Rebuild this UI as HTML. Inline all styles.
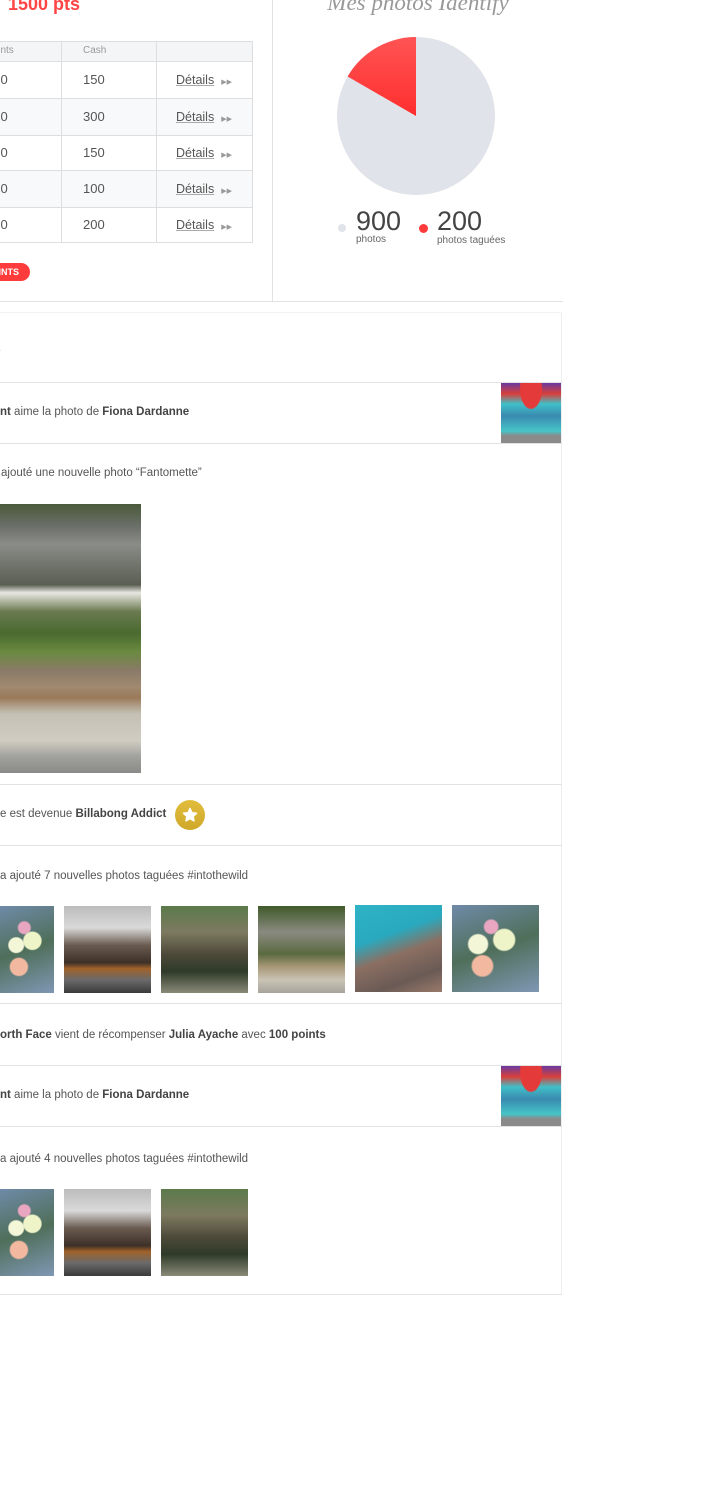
<!DOCTYPE html>
<html><head><meta charset="utf-8"><style>
*{margin:0;padding:0;box-sizing:border-box}
body{width:701px;height:1492px;background:#fff;position:relative;overflow:hidden;font-family:"Liberation Sans",sans-serif;color:#555}
.a{position:absolute}
.hl{position:absolute;height:1px;background:#e2e2e2}
.t{position:absolute;font-size:11.5px;color:#555;white-space:nowrap;line-height:14px}
.t b{color:#444}
table{border-collapse:collapse;position:absolute;left:-36px;top:41px;font-size:13px;color:#555}
td{border:1px solid #dedede;padding:0 0 2px 21px}
.det{color:#555;text-decoration:underline;text-decoration-color:#aaa;font-size:12.5px}
.arr{font-size:7px;color:#999;margin-left:7px}
.flw{background:radial-gradient(circle at 30% 45%,#f4f6d8 0 12%,transparent 14%),radial-gradient(circle at 60% 40%,#eef3c8 0 14%,transparent 16%),radial-gradient(circle at 35% 70%,#f2b8a0 0 12%,transparent 14%),radial-gradient(circle at 45% 25%,#e9a6c0 0 8%,transparent 10%),linear-gradient(160deg,#6f8aa8,#4f6f5a 50%,#7f97b4)}
.mtn{background:linear-gradient(180deg,#bcbcbc 0,#d9d9d9 25%,#6a5b50 45%,#3c3028 65%,#a0622a 72%,#6a6a6a 85%,#3a3a3a)}
.cab{background:linear-gradient(180deg,#5b7a4a 0,#7d7a60 30%,#4e4a3a 55%,#2f3a28 75%,#8a8a78)}
.hou{background:linear-gradient(180deg,#3f5a2a 0,#8a8a80 30%,#5a6a40 55%,#a89878 70%,#c9c3b4 85%,#a8a49c)}
.sea{background:linear-gradient(160deg,#2fb3c6 0,#2aa9be 35%,#8b6f62 55%,#6a5a55 80%,#9a7a6a)}
.bike{background:radial-gradient(ellipse at 50% 10%,#e53a3a 0 25%,transparent 27%),linear-gradient(180deg,#6a3aa0 0,#d8403a 18%,#3fc0c8 35%,#3a8ab0 55%,#46c4c8 80%,#8a8a8a 88%)}
</style></head><body>

<div class="a" style="left:8px;top:-6px;font-size:18px;font-weight:bold;color:#ff4545">1500 pts</div>

<table>
<tr style="background:#f4f5f7;height:20px;font-size:10px;color:#999"><td style="width:97px">Points</td><td style="width:95px">Cash</td><td style="width:96px;padding-left:19px"></td></tr>
<tr style="height:37px"><td>100</td><td>150</td><td style="padding-left:19px"><span class="det">Détails</span><span class="arr">▶▶</span></td></tr>
<tr style="height:37px;background:#f8f9fa"><td>200</td><td>300</td><td style="padding-left:19px"><span class="det">Détails</span><span class="arr">▶▶</span></td></tr>
<tr style="height:35px"><td>100</td><td>150</td><td style="padding-left:19px"><span class="det">Détails</span><span class="arr">▶▶</span></td></tr>
<tr style="height:37px;background:#f8f9fa"><td>100</td><td>100</td><td style="padding-left:19px"><span class="det">Détails</span><span class="arr">▶▶</span></td></tr>
<tr style="height:35px"><td>100</td><td>200</td><td style="padding-left:19px"><span class="det">Détails</span><span class="arr">▶▶</span></td></tr>
</table>

<div class="a" style="left:-40px;top:263px;width:70px;height:18px;border-radius:9px;background:#ff3b3b;color:#fff;font-size:9px;font-weight:bold;text-align:right;padding-right:11px;line-height:18px">POINTS</div>

<div class="a" style="left:272px;top:0;width:1px;height:301px;background:#e2e2e2"></div>
<div class="hl" style="left:0;top:301px;width:563px"></div>

<div class="a" style="left:300px;top:-10px;width:236px;text-align:center;font-family:'Liberation Serif',serif;font-style:italic;font-size:23px;color:#999">Mes photos Identify</div>

<svg class="a" style="left:337px;top:37px" width="158" height="158" viewBox="0 0 158 158">
<defs><linearGradient id="g" x1="0" y1="0" x2="0" y2="1"><stop offset="0" stop-color="#ff5454"/><stop offset="1" stop-color="#ff2e2e"/></linearGradient></defs>
<circle cx="79" cy="79" r="79" fill="#e0e3e9"/>
<path d="M79 79 L79 0 A79 79 0 0 0 10.6 39.5 Z" fill="url(#g)"/>
</svg>

<div class="a" style="left:338px;top:224px;width:8px;height:8px;border-radius:50%;background:#e0e3e9"></div>
<div class="a" style="left:356px;top:206px;font-size:27px;color:#444;line-height:30px">900</div>
<div class="a" style="left:356px;top:234px;font-size:10px;color:#666">photos</div>
<div class="a" style="left:419px;top:224px;width:9px;height:9px;border-radius:50%;background:#ff3b3b"></div>
<div class="a" style="left:437px;top:206px;font-size:27px;color:#444;line-height:30px">200</div>
<div class="a" style="left:437px;top:235px;font-size:10px;color:#666">photos taguées</div>

<!-- feed -->
<div class="a" style="left:561px;top:312px;width:1px;height:983px;background:#eee"></div>
<div class="hl" style="left:0;top:312px;width:562px;background:#f2f2f2"></div>
<div class="t" style="left:-2px;top:341px">.</div>
<div class="hl" style="left:0;top:382px;width:562px"></div>
<div class="t" style="left:0;top:405px"><b>nt</b> aime la photo de <b>Fiona Dardanne</b></div>
<div class="a bike" style="left:501px;top:383px;width:60px;height:60px"></div>
<div class="hl" style="left:0;top:443px;width:562px"></div>
<div class="t" style="left:1px;top:466px">ajouté une nouvelle photo “Fantomette”</div>
<div class="a" style="left:0;top:504px;width:141px;height:269px;background:linear-gradient(180deg,#4a5a3a 0,#6a6e68 8%,#8a8c88 15%,#5a5e52 30%,#e8e8e2 33%,#6a7a50 40%,#4a6a30 48%,#6a8a40 55%,#8a7a68 62%,#a08a70 68%,#9a7a5a 72%,#c4c0b4 78%,#d0ccc2 88%,#a0a09c 94%,#8a8a88)"></div>
<div class="hl" style="left:0;top:784px;width:562px"></div>
<div class="t" style="left:0;top:807px">e est devenue <b>Billabong Addict</b></div>
<div class="a" style="left:175px;top:800px;width:30px;height:30px;border-radius:50%;background:linear-gradient(180deg,#e2bd3c,#cfa82a)"></div>
<svg class="a" style="left:181px;top:806px" width="18" height="18" viewBox="0 0 18 18"><path d="M9 2.5 L11 6.8 L15.5 7.3 L12.1 10.4 L13 14.9 L9 12.6 L5 14.9 L5.9 10.4 L2.5 7.3 L7 6.8 Z" fill="#fff" stroke="#fff" stroke-linejoin="round" stroke-width="1.5"/></svg>
<div class="hl" style="left:0;top:845px;width:562px"></div>
<div class="t" style="left:0;top:869px">a ajouté 7 nouvelles photos taguées #intothewild</div>
<div class="a flw" style="left:0;top:906px;width:54px;height:87px"></div>
<div class="a mtn" style="left:64px;top:906px;width:87px;height:87px"></div>
<div class="a cab" style="left:161px;top:906px;width:87px;height:87px"></div>
<div class="a hou" style="left:258px;top:906px;width:87px;height:87px"></div>
<div class="a sea" style="left:355px;top:905px;width:87px;height:87px"></div>
<div class="a flw" style="left:452px;top:905px;width:87px;height:87px"></div>
<div class="hl" style="left:0;top:1003px;width:562px"></div>
<div class="t" style="left:0;top:1028px"><b>orth Face</b> vient de récompenser <b>Julia Ayache</b> avec <b>100 points</b></div>
<div class="hl" style="left:0;top:1065px;width:562px"></div>
<div class="t" style="left:0;top:1088px"><b>nt</b> aime la photo de <b>Fiona Dardanne</b></div>
<div class="a bike" style="left:501px;top:1066px;width:60px;height:60px"></div>
<div class="hl" style="left:0;top:1126px;width:562px"></div>
<div class="t" style="left:0;top:1152px">a ajouté 4 nouvelles photos taguées #intothewild</div>
<div class="a flw" style="left:0;top:1189px;width:54px;height:87px"></div>
<div class="a mtn" style="left:64px;top:1189px;width:87px;height:87px"></div>
<div class="a cab" style="left:161px;top:1189px;width:87px;height:87px"></div>
<div class="hl" style="left:0;top:1294px;width:562px"></div>
</body></html>
